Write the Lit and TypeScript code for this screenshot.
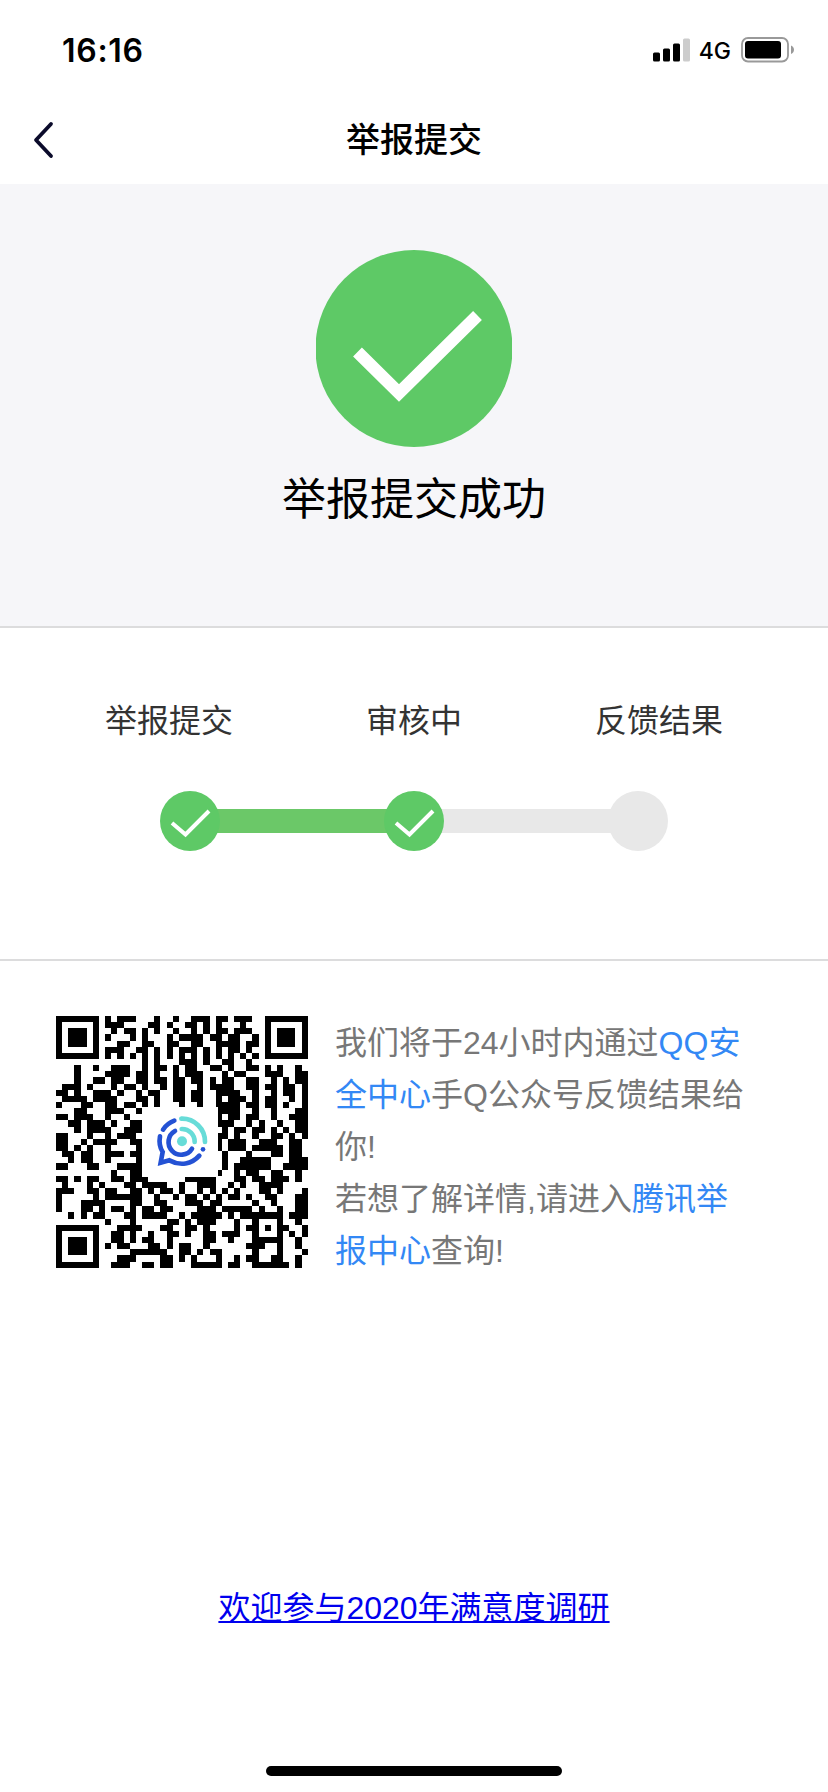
import { LitElement, html, css, svg } from "lit";
import { customElement, property } from "lit/decorators.js";

const CODE = [
  "#######.#.###...#..#..###.##.###..#######",
  "#.....#.###....##.#..##.#.#...#...#.....#",
  "#.###.#..#.##.#.#..#..#.#.##.###..#.###.#",
  "#.###.#.#...#.#...#.####.##.##..#.#.###.#",
  "#.###.#...##..##..##..##..####.##.#.###.#",
  "#.....#.###..##.#.#.###.#.#.##.#..#.....#",
  "#######.#.#.#.#.#.#.#.#.#.#.#.#.#.#######",
  "..............#.#...###.#..##..#.........",
  "...#..#..###..#.##.#.##..##.#..##.#.#..#.",
  "...#....####.##.#..#.###...#.##...###..##",
  "...#..##.##..##.##.##.##.#.##..##..#.#.##",
  ".###.#...#.##.#..#.##..#.####..##.##.##.#",
  "##.#..###.#..#.##..##.##..####..#..#.##.#",
  ".####.####...##.#..##.##..#.###.#.##..#.#",
  "#...##..##.##.#.#...#..#..####.##.##.#..#",
  "...##...###..#............####..#..#...##",
  "##.###..#..#..............#.##.##..#..###",
  "..##.###.#..##............###..#.#..#..##",
  "...#.####..###.............#.##.##.#.#.##",
  "##...#..#.###.............##.#..#..##.#.#",
  "##..#.####..##............#.###..###..##.",
  "##.#.#..#....#............#.###.#####.##.",
  ".##.##..###.##.............#...#...##.##.",
  "..#.##..#....#.............#..#####...###",
  "##...##...####.............#.######..####",
  ".........#..###...........#..#.##..##..#.",
  "##.#.##..##.###......#####...##.##.###.#.",
  ".#...#.#...##.####..#..###..#.#..####....",
  "###..##.##..##.#.##.#..#.#.#.#...##.#...#",
  "#.....#.######..#..#.##.#.#.##.#..##...##",
  "#...####....##..##...###.##.....#..#...##",
  "#...##.#.##.#.##.##....###.#####.#..#..##",
  "..#.#.##...##.####..#.#####.#.#######.###",
  "........#...#.....##.#.###...#..#...#..#.",
  "#######...####...##..##.#....#.##.#.##..#",
  "#.....#..##.#..#..##.#..##.###..#...#.#.#",
  "#.###.#..##.#.##..#.....##..#...#####..#.",
  "#.###.#.#.##...##.#.##..#......###..#..#.",
  "#.###.#.....######..##.#.##.....#...#...#",
  "#.....#...###....##.#.#...#..#.##..##..#.",
  "#######..###..##.##...#####.##..######.#.",
];

@customElement("qr-code")
class QrCode extends LitElement {
  static styles = css`
    :host { display: block; width: 252px; height: 252px; flex: none; }
    svg { display: block; }
  `;
  render() {
    const d = CODE.map((row, y) =>
      [...row].map((c, x) => (c === "#" ? `M${x} ${y}h1v1h-1z` : "")).join("")
    ).join("");
    return html`<svg width="252" height="252" viewBox="0 0 252 252">
      <g transform="scale(6.14)"><path d=${d} fill="#000" shape-rendering="crispEdges" /></g>
      <rect x="86" y="91" width="76" height="70" fill="#fff" />
      <g transform="translate(84 82) scale(.3333)" fill="none" stroke-width="14" stroke-linecap="round">
        <circle cx="126" cy="130" r="15" fill="#67dcd8" />
        <path stroke="#67dcd8" d="M125 93A38 38 0 0 1 164 132M124 62A69 69 0 0 1 195 132" />
        <path stroke="#2452d4" d="M105 99A38 38 0 1 0 156 152M69 95A68 68 0 0 1 103 68M60 115C56 137 61 151 68 162L62 194L88 187C121 205 155 199 178 173" />
        <circle cx="189" cy="154" r="7" fill="#2452d4" />
      </g>
    </svg>`;
  }
}

@customElement("step-bar")
class StepBar extends LitElement {
  @property({ attribute: false }) done = [true, true, false];
  static styles = css`
    :host { display: flex; align-items: center; }
    .dot { display: block; width: 60px; height: 60px; flex: none; position: relative; }
    .bar { flex: 1; height: 24px; margin: 0 -3px; background: #e8e8e8; }
    .bar.on { background: #6bc868; }
  `;
  render() {
    return this.done.map(
      (on, i) => html`
        ${i ? html`<div class="bar ${on ? "on" : ""}"></div>` : ""}
        <svg class="dot" viewBox="0 0 60 60">
          <circle cx="30" cy="30" r="30" fill=${on ? "#5ec966" : "#e8e8e8"} />
          ${on ? svg`<path d="M12 32L25.5 43.5L49 20" fill="none" stroke="#fff" stroke-width="4" />` : ""}
        </svg>`
    );
  }
}

@customElement("app-root")
class AppRoot extends LitElement {
  static styles = css`
    :host {
      display: flex; flex-direction: column; box-sizing: border-box;
      width: 828px; height: 1792px; overflow: hidden; background: #fff; color: #000;
      font-family: "Liberation Sans", "Noto Sans CJK SC", sans-serif;
    }
    svg { display: block; }
    .status {
      display: flex; align-items: center; height: 100px; flex: none;
      padding: 0 33px 0 62px; font-family: Inter, sans-serif; box-sizing: border-box;
    }
    .time { font-size: 32px; font-weight: 600; flex: 1; letter-spacing: 0.7px; }
    .net { font-size: 23px; font-weight: 500; margin: 2px 10px 0 8px; }
    .nav {
      display: grid; grid-template-columns: 60px 1fr 60px; align-items: center;
      height: 84px; flex: none; box-sizing: border-box; padding-bottom: 4px;
    }
    .back { margin-left: 32px; }
    .title { text-align: center; font-size: 34px; font-weight: 500; line-height: 50px; }
    .hero {
      display: flex; flex-direction: column; align-items: center; height: 444px;
      flex: none; box-sizing: border-box; padding-top: 66px; background: #f6f6f9;
      border-bottom: 2px solid #dcdcdd;
    }
    .done { font-size: 44px; line-height: 64px; margin-top: 21px; }
    .progress {
      height: 333px; flex: none; box-sizing: border-box; border-bottom: 2px solid #dcdcdd;
      padding-top: 69px;
    }
    .labels {
      display: flex; justify-content: space-between; padding: 0 105px;
      font-size: 32px; line-height: 48px; color: #333;
    }
    .steps { margin: 46px 160px 0; }
    .info { display: flex; padding: 55px 56px 0; gap: 27px; height: 567px; flex: none; box-sizing: border-box; }
    .copy { margin: 1px 0 0; font-size: 32px; line-height: 52px; color: #777; white-space: nowrap; }
    .copy b { font-weight: 400; color: #3388f5; }
    .foot { display: flex; flex-direction: column; align-items: center; justify-content: space-between; flex: 1; padding: 56px 0 16px; }
    .link { font-size: 32px; line-height: 48px; color: #0000ee; text-underline-offset: 2px; text-decoration-thickness: 2px; text-decoration-skip-ink: none; }
    .home { width: 296px; height: 10px; border-radius: 5px; background: #000; }
  `;
  render() {
    return html`
      <div class="status">
        <div class="time">16:16</div>
        <svg width="38" height="24" viewBox="0 0 38 24">
          <rect x="0" y="14.5" width="7" height="9" rx="1.5" />
          <rect x="10" y="10.5" width="7" height="13" rx="1.5" />
          <rect x="20" y="5.5" width="7" height="18" rx="1.5" />
          <rect x="30" y=".5" width="7" height="23" rx="1.5" fill="#ccc" />
        </svg>
        <div class="net">4G</div>
        <svg width="54" height="26" viewBox="0 0 54 26">
          <rect x="1" y="1" width="46" height="23.5" rx="6" fill="none" stroke="#999" stroke-width="1.8" />
          <rect x="4" y="4" width="36" height="17.5" rx="3" />
          <path d="M50 8.5C54 10 54 15.5 50 17z" fill="#999" />
        </svg>
      </div>
      <div class="nav">
        <svg class="back" width="22" height="38" viewBox="0 0 22 38">
          <path d="M19 3L4 19L19 35" fill="none" stroke="#0b0b2b" stroke-width="3.8" stroke-linecap="round" stroke-linejoin="round" />
        </svg>
        <div class="title">举报提交</div>
      </div>
      <div class="hero">
        <svg width="196" height="197" viewBox="0 0 196 197">
          <circle cx="98" cy="98.5" r="98.5" fill="#5ec966" />
          <path d="M41.5 102L83 143L161.5 65.5" fill="none" stroke="#fff" stroke-width="12.5" />
        </svg>
        <div class="done">举报提交成功</div>
      </div>
      <div class="progress">
        <div class="labels"><span>举报提交</span><span>审核中</span><span>反馈结果</span></div>
        <step-bar class="steps"></step-bar>
      </div>
      <div class="info">
        <qr-code></qr-code>
        <p class="copy">
          我们将于24小时内通过<b>QQ安<br />全中心</b>手Q公众号反馈结果给<br />你!<br />若想了解详情,请进入<b>腾讯举<br />报中心</b>查询!
        </p>
      </div>
      <div class="foot">
        <a class="link" href="#">欢迎参与2020年满意度调研</a>
        <div class="home"></div>
      </div>
    `;
  }
}
